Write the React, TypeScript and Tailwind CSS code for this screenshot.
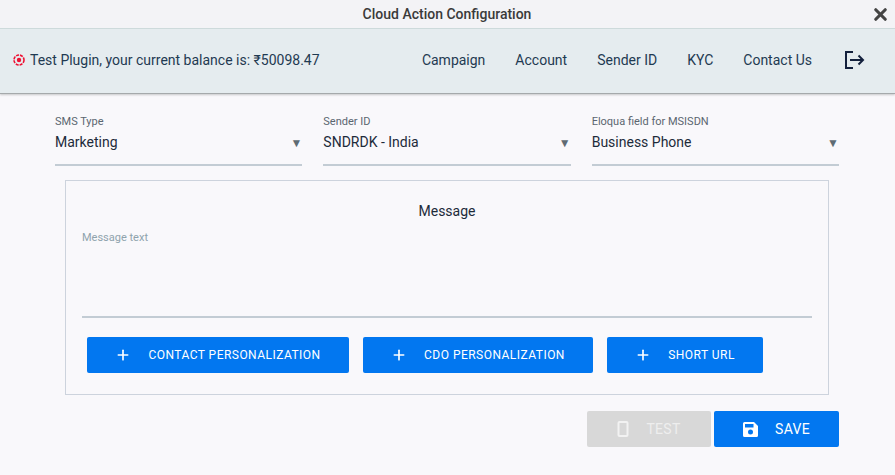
import { Plus, X } from "lucide-react";

const navLinks = ["Campaign", "Account", "Sender ID", "KYC", "Contact Us"];

const fields = [
  { label: "SMS Type", value: "Marketing" },
  { label: "Sender ID", value: "SNDRDK - India" },
  { label: "Eloqua field for MSISDN", value: "Business Phone" },
];

const actions = [
  { name: "CONTACT PERSONALIZATION", width: "w-[262px]" },
  { name: "CDO PERSONALIZATION", width: "w-[230px]" },
  { name: "SHORT URL", width: "w-[156px]" },
];

const App = () => {
  return (
    <div className="w-[895px] h-[475px] overflow-hidden bg-[#f9f8fb] font-['Roboto',sans-serif] text-[#1d2b3a]">
      <header className="relative flex items-center justify-center h-[28px] bg-[#f3f3f6]">
        <h1 className="text-[14px] font-medium text-[#3a3a3a] pr-[1px]">
          Cloud Action Configuration
        </h1>
        <button className="absolute right-[5px] top-[5px] text-[#444]">
          <X size={19} strokeWidth={4} />
        </button>
      </header>

      <nav className="flex items-center justify-between h-[66px] pl-[12px] pb-[2px] pr-[30px] bg-[#e5ecef] border-y border-t-[#cddadb] border-b-[#a5a9ab] shadow-[0_1px_2px_rgba(0,0,0,0.2)]">
        <div className="flex items-center gap-[4px] text-[14px] text-[#1f3a52]">
          <svg width="14" height="14" viewBox="0 0 14 14" fill="none">
            <circle
              cx="7"
              cy="7"
              r="5"
              stroke="#ee1133"
              strokeWidth="1.6"
              strokeDasharray="3 1"
            />
            <circle cx="7" cy="7" r="2.2" fill="#ee1133" />
          </svg>
          <span>Test Plugin, your current balance is: ₹50098.47</span>
        </div>
        <div className="flex items-center gap-[30px] text-[14px] text-[#1f3a52]">
          {navLinks.map((link) => (
            <a key={link}>{link}</a>
          ))}
          <svg
            width="22"
            height="22"
            viewBox="0 0 22 22"
            fill="none"
            stroke="#14213d"
            strokeWidth="2"
            className="ml-[1px]"
          >
            <path d="M10 3H3v16h7" />
            <path d="M7 11h13M15.500 6.500 20 11l-4.500 4.500" />
          </svg>
        </div>
      </nav>

      <div className="grid grid-cols-3 gap-[21px] w-[784px] ml-[55px] pt-[21px]">
        {fields.map((field) => (
          <div
            key={field.label}
            className="relative h-[51px] border-b-2 border-[#c3ccd4]"
          >
            <p className="text-[11px] leading-[13px] text-[#5b6670]">
              {field.label}
            </p>
            <p className="mt-[4px] text-[14px] leading-[20px] text-[#1d2b3a]">
              {field.value}
            </p>
            <span className="absolute right-[0px] top-[19px] text-[12px] text-[#5f6b73]">
              ▼
            </span>
          </div>
        ))}
      </div>

      <section className="mt-[14px] ml-[65px] w-[764px] h-[215px] border border-[#cdd3dd] px-[16px] pt-[22px]">
        <p className="text-center text-[14px] leading-[17px] text-[#1d2b3a]">
          Message
        </p>
        <p className="mt-[11px] h-[83px] text-[11px] leading-[13px] text-[#8fa3ad] border-b-2 border-[#c3ccd4] box-content pb-[2px]">
          Message text
        </p>
        <div className="flex gap-[14px] mt-[19px] pl-[5px]">
          {actions.map((action) => (
            <button
              key={action.name}
              className={`flex items-center justify-center gap-[17px] h-[36px] rounded-[2px] bg-[#0277f0] text-white text-[12px] tracking-[0.47px] ${action.width}`}
            >
              <Plus size={16} strokeWidth={2.5} />
              {action.name}
            </button>
          ))}
        </div>
      </section>

      <div className="flex justify-end gap-[3px] mt-[16px] pr-[56px]">
        <button className="flex items-center justify-center gap-[17px] w-[124px] h-[36px] rounded-[2px] bg-[#d8d8d8] text-[#eeeeee] text-[14px] tracking-[0.3px]">
          <svg width="12" height="16" viewBox="0 0 12 16" fill="none">
            <rect x="1.500" y="1" width="9" height="14" rx="1" stroke="#f2f2f2" strokeWidth="2" />
          </svg>
          TEST
        </button>
        <button className="flex items-center justify-center gap-[17px] w-[125px] h-[36px] rounded-[2px] bg-[#0277f0] text-white text-[14px] tracking-[0.3px]">
          <svg width="15" height="15" viewBox="0 0 15 15" fill="white">
            <path d="M0 1.500A1.500 1.500 0 0 1 1.500 0H11l4 4v9.500a1.500 1.500 0 0 1-1.500 1.500h-12A1.500 1.500 0 0 1 0 13.500ZM2 2v3.500h8.500V2ZM7.500 7.500a2.500 2.500 0 1 0 0 5 2.500 2.500 0 0 0 0-5Z" fillRule="evenodd" />
          </svg>
          SAVE
        </button>
      </div>
    </div>
  );
};

export default App;
